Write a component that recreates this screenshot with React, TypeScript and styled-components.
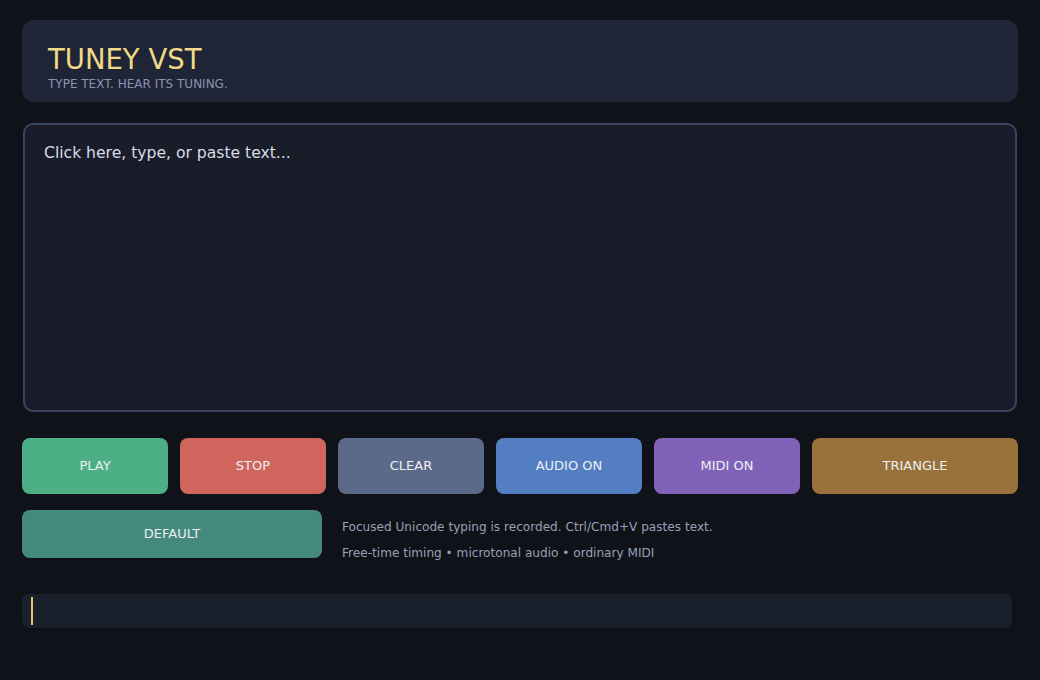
import React from "react";
import styled, { createGlobalStyle } from "styled-components";

const Global = createGlobalStyle`
  html, body { margin: 0; padding: 0; background: #10121a; }
  body { font-family: "DejaVu Sans", "Noto Sans", sans-serif; }
  * { box-sizing: border-box; }
`;

const Page = styled.div`
  width: 1040px;
  height: 680px;
  padding: 20px 22px 0 22px;
  display: flex;
  flex-direction: column;
  background: #10121a;
`;

const Header = styled.header`
  height: 82px;
  border-radius: 12px;
  background: #1f2437;
  padding: 23px 26px 0 26px;
  display: flex;
  flex-direction: column;
`;

const Title = styled.h1`
  margin: 0;
  font-size: 27.5px;
  line-height: 32px;
  font-weight: normal;
  color: #f0da88;
`;

const Subtitle = styled.div`
  margin-top: 2px;
  font-size: 12px;
  line-height: 14px;
  color: #8b94ac;
`;

const Editor = styled.textarea`
  margin: 21px 1px 0 1px;
  height: 289px;
  border: 2px solid #3a4560;
  border-radius: 10px;
  background: #181d29;
  color: #dde1ea;
  padding: 18px 19px;
  font-family: "DejaVu Sans", sans-serif;
  font-size: 15.6px;
  line-height: 20px;
  resize: none;
  outline: none;
  &::placeholder { color: #d8dce6; opacity: 1; }
`;

const ButtonRow = styled.div`
  margin-top: 26px;
  display: grid;
  grid-template-columns: repeat(5, 146px) 206px;
  gap: 12px;
`;

const Btn = styled.button<{ $bg: string; $h?: number }>`
  height: ${(p) => p.$h ?? 56}px;
  border: none;
  border-radius: 8px;
  background: ${(p) => p.$bg};
  color: #eef0f4;
  font-family: "DejaVu Sans", sans-serif;
  font-size: 13px;
  line-height: 14px;
  cursor: pointer;
  padding: 0;
`;

const SecondRow = styled.div`
  margin-top: 16px;
  display: flex;
  align-items: flex-start;
  gap: 20px;
`;

const WideBtn = styled(Btn)`
  width: 300px;
`;

const Info = styled.div`
  display: flex;
  flex-direction: column;
  gap: 12px;
  padding-top: 10px;
  font-size: 12.1px;
  line-height: 14px;
  color: #98a0b5;
`;

const Output = styled.div`
  margin-top: 34px;
  width: 990px;
  height: 34px;
  border-radius: 6px;
  background: #1a1f2c;
  display: flex;
  align-items: center;
  padding-left: 9px;
`;

const Caret = styled.span`
  width: 2px;
  height: 28px;
  background: #e9c46a;
`;

const buttons = [
  { label: "PLAY", bg: "#4daf85" },
  { label: "STOP", bg: "#d0655d" },
  { label: "CLEAR", bg: "#5c6a8a" },
  { label: "AUDIO ON", bg: "#537ec1" },
  { label: "MIDI ON", bg: "#8063b9" },
  { label: "TRIANGLE", bg: "#98713b" },
];

export default function App() {
  return (
    <>
      <Global />
      <Page>
        <Header>
          <Title>TUNEY VST</Title>
          <Subtitle>TYPE TEXT. HEAR ITS TUNING.</Subtitle>
        </Header>
        <Editor placeholder="Click here, type, or paste text..." />
        <ButtonRow>
          {buttons.map((b) => (
            <Btn key={b.label} $bg={b.bg}>
              {b.label}
            </Btn>
          ))}
        </ButtonRow>
        <SecondRow>
          <WideBtn $bg="#43897c" $h={48}>
            DEFAULT
          </WideBtn>
          <Info>
            <div>Focused Unicode typing is recorded. Ctrl/Cmd+V pastes text.</div>
            <div>Free-time timing • microtonal audio • ordinary MIDI</div>
          </Info>
        </SecondRow>
        <Output>
          <Caret />
        </Output>
      </Page>
    </>
  );
}
